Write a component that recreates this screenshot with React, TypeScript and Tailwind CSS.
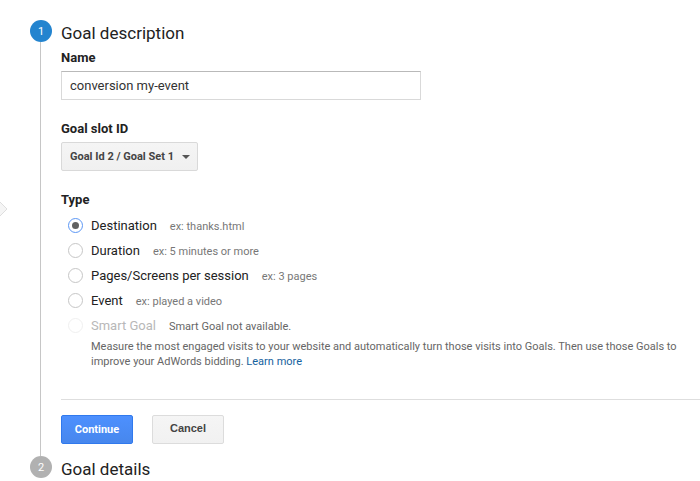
import type { ReactNode } from 'react';

type GoalType = { id: string; name: string; hint: string; disabled?: boolean };

const goalTypes: GoalType[] = [
  { id: 'destination', name: 'Destination', hint: 'ex: thanks.html' },
  { id: 'duration', name: 'Duration', hint: 'ex: 5 minutes or more' },
  { id: 'pages', name: 'Pages/Screens per session', hint: 'ex: 3 pages' },
  { id: 'event', name: 'Event', hint: 'ex: played a video' },
  { id: 'smart', name: 'Smart Goal', hint: 'Smart Goal not available.', disabled: true },
];

function Step({ number, title, active, children }: { number: number; title: string; active?: boolean; children?: ReactNode }) {
  return (
    <li className="flex gap-[9px]">
      <div className="flex w-[22px] shrink-0 flex-col items-center">
        <span
          className={`flex size-[22px] items-center justify-center rounded-full pt-0.5 text-[11px] text-white ${active ? 'bg-[#2384cf]' : 'bg-[#b1b1b1]'}`}
        >
          {number}
        </span>
        {children && <span className="mr-px w-px grow bg-[#c6c6c6]" />}
      </div>
      <div className="min-w-0 grow pt-0.5">
        <h2 className="text-[17px] leading-[22px]">{title}</h2>
        {children}
      </div>
    </li>
  );
}

function GoalTypeRow({ goal }: { goal: GoalType }) {
  return (
    <div className="flex h-[25px] items-center pl-[7px]">
      <input
        type="radio"
        name="goal-type"
        id={goal.id}
        defaultChecked={goal.id === 'destination'}
        disabled={goal.disabled}
        className="flex size-[15px] shrink-0 appearance-none items-center justify-center rounded-full border border-[#c6c6c6] bg-white checked:border-[#5c97f5] checked:before:size-[7px] checked:before:rounded-full checked:before:bg-[#616161] disabled:border-[#f0f0f0]"
      />
      <label htmlFor={goal.id} className={`flex items-baseline gap-[13px] pt-0.5 pl-2 leading-5 ${goal.disabled ? 'text-[#b8b8b8]' : ''}`}>
        {goal.name}
        <span className={`text-[11px] ${goal.disabled ? 'text-[#666]' : 'text-[#777]'}`}>{goal.hint}</span>
      </label>
    </div>
  );
}

export default function App() {
  return (
    <main className="relative overflow-hidden bg-white pt-5 pl-[30px] font-[Roboto,sans-serif] text-[13px] text-[#222]">
      <svg className="absolute top-[201px] left-0" width="8" height="16" viewBox="0 0 8 16" aria-hidden="true">
        <path d="M0 1 7 8 0 15" fill="#f5f5f5" stroke="#dedede" />
      </svg>
      <ol>
        <Step number={1} title="Goal description" active>
          <form onSubmit={(e) => e.preventDefault()}>
            <label htmlFor="goal-name" className="mt-1 block leading-5 font-bold">Name</label>
            <input
              id="goal-name"
              type="text"
              defaultValue="conversion my-event"
              className="mt-[3px] block h-[29px] w-full max-w-[360px] border border-[#d9d9d9] border-t-[#b9b9b9] px-2 text-[#333] outline-none"
            />
            <label htmlFor="goal-slot" className="mt-[19px] block leading-5 font-bold">Goal slot ID</label>
            <div className="relative mt-[3px] w-fit">
              <select
                id="goal-slot"
                className="block h-[29px] w-[137px] appearance-none rounded-[2px] border border-[#d9d9d9] bg-linear-to-b from-[#f5f5f5] to-[#f0f0f0] pt-0.5 pl-2 text-[11px] font-bold text-[#444]"
              >
                <option>Goal Id 2 / Goal Set 1</option>
              </select>
              <svg className="pointer-events-none absolute top-[13px] right-2" width="8" height="4" viewBox="0 0 8 4" aria-hidden="true">
                <path d="M0 0h8L4 4Z" fill="#555" />
              </svg>
            </div>
            <fieldset className="mt-[19px]">
              <legend className="mb-[3px] leading-5 font-bold">Type</legend>
              {goalTypes.map((goal) => (
                <GoalTypeRow key={goal.id} goal={goal} />
              ))}
            </fieldset>
            <p className="mt-px mr-5 ml-[30px] text-[11px] leading-[15px] text-[#666]">
              Measure the most engaged visits to your website and automatically turn those visits into Goals. Then use those Goals to improve your AdWords bidding.{' '}
              <a href="#learn-more" className="text-[#15629e]">Learn more</a>
            </p>
            <div className="mt-[30px] flex gap-[19px] border-t border-[#dedede] pt-[15px] pb-3">
              <button
                type="submit"
                className="h-[29px] w-[72px] rounded-[2px] border border-[#3079ed] bg-linear-to-b from-[#4d90fe] to-[#4787ed] pt-0.5 text-[11px] font-bold text-white"
              >
                Continue
              </button>
              <button
                type="button"
                className="h-[29px] w-[72px] rounded-[2px] border border-[#dcdcdc] bg-linear-to-b from-[#f5f5f5] to-[#f1f1f1] pb-[3px] font-['Liberation_Sans',Arial,sans-serif] text-[11px] font-bold text-[#444]"
              >
                Cancel
              </button>
            </div>
          </form>
        </Step>
        <Step number={2} title="Goal details" />
      </ol>
    </main>
  );
}
